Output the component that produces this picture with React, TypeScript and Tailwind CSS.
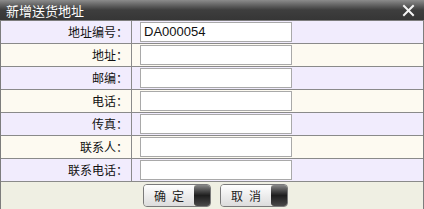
import React from "react";

const rows = [
  { label: "地址编号：", value: "DA000054" },
  { label: "地址：", value: "" },
  { label: "邮编：", value: "" },
  { label: "电话：", value: "" },
  { label: "传真：", value: "" },
  { label: "联系人：", value: "" },
  { label: "联系电话：", value: "" },
];

function Btn({ text }: { text: string }) {
  return (
    <div className="flex h-[23px] w-[68px] overflow-hidden rounded-[4px] border border-[#7a7a7a]">
      <div className="flex w-[50px] items-center justify-center bg-gradient-to-b from-[#ffffff] to-[#dcdcdc] text-[12px] tracking-[6px] pl-[6px] text-[#222]">
        {text}
      </div>
      <div className="flex-1 rounded-l-[3px] bg-gradient-to-b from-[#8a8a8a] via-[#1e1e1e] to-[#4a4a4a]" />
    </div>
  );
}

export default function App() {
  return (
    <div
      className="w-[424px] h-[209px] overflow-hidden bg-[#efefe3] flex flex-col"
      style={{ fontFamily: '"Noto Sans CJK SC", "DejaVu Sans", sans-serif' }}
    >
      <div className="h-[20px] shrink-0 flex items-center justify-between bg-gradient-to-b from-[#8c8c8c] via-[#3e3e3e] to-[#363636] pl-[6px] pr-[9px]">
        <span className="text-[13px] leading-none text-white">新增送货地址</span>
        <svg width="13" height="13" viewBox="0 0 13 13">
          <path d="M2 2 L11 11 M11 2 L2 11" stroke="#f4f4f4" strokeWidth="2" strokeLinecap="square" />
        </svg>
      </div>
      <div className="border-l border-r border-t border-[#7d7d7d]">
        {rows.map((r, i) => (
          <div
            key={i}
            className={`flex h-[23px] border-b border-[#8a8a8a] ${i % 2 === 0 ? "bg-[#f1ecfd]" : "bg-[#fdfaf1]"}`}
          >
            <div className="w-[131px] shrink-0 flex items-center justify-end pr-[3px] text-[12px] text-[#111] border-r border-[#8a8a8a]">
              {r.label}
            </div>
            <div className="flex items-center pl-[8px]">
              <div className="w-[152px] h-[20px] bg-white border border-[#a9a9a9] flex items-center pl-[3px] text-[13px] text-[#111]" style={{ fontFamily: '"Liberation Sans", "Noto Sans CJK SC", sans-serif' }}>
                {r.value}
              </div>
            </div>
          </div>
        ))}
      </div>
      <div className="flex-1 flex items-center justify-start pl-[142px] gap-[9px] border-l border-r border-[#7d7d7d]">
        <Btn text="确定" />
        <Btn text="取消" />
      </div>
    </div>
  );
}
